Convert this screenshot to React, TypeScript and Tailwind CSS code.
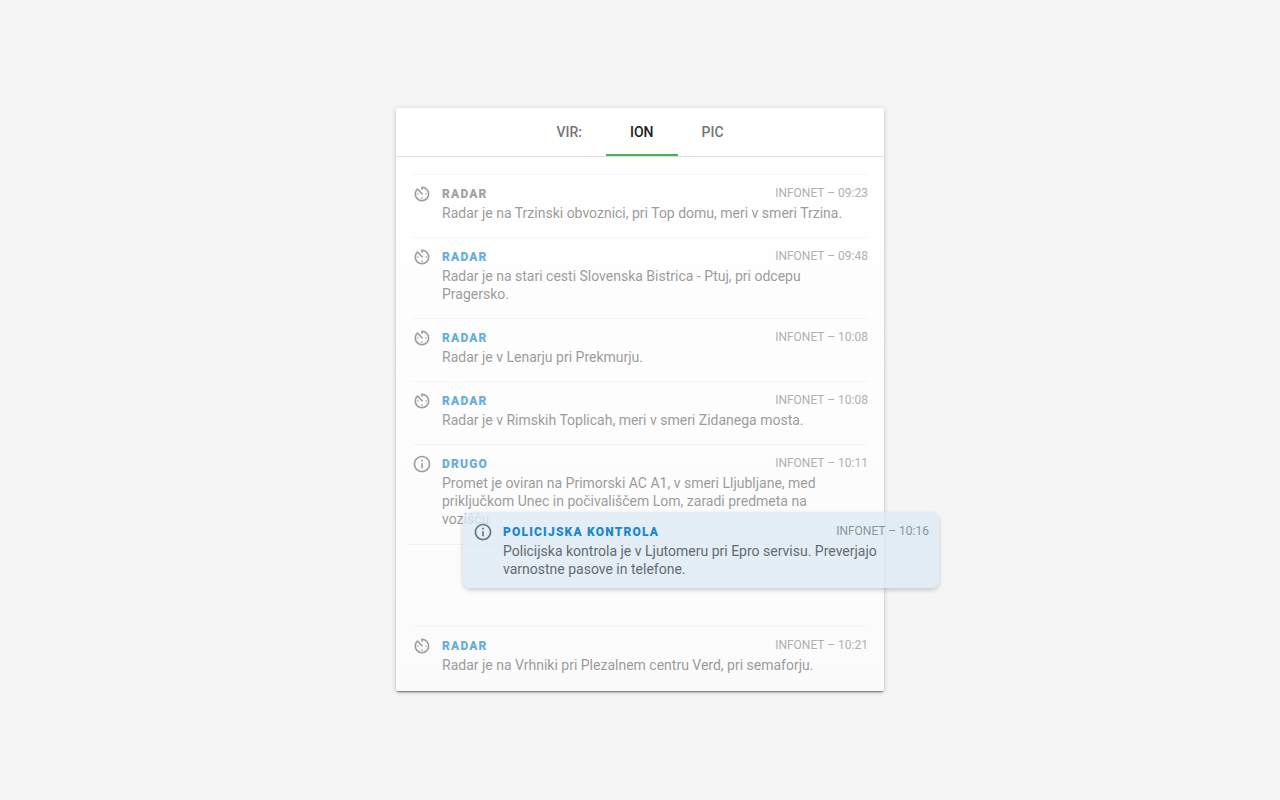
import { useState } from "react";
import { MdAvTimer, MdInfoOutline } from "react-icons/md";

type Report = {
  kind: "radar" | "info";
  title: string;
  time: string;
  text: string;
  seen?: boolean;
};

const before: Report[] = [
  { kind: "radar", title: "RADAR", time: "09:23", text: "Radar je na Trzinski obvoznici, pri Top domu, meri v smeri Trzina.", seen: true },
  { kind: "radar", title: "RADAR", time: "09:48", text: "Radar je na stari cesti Slovenska Bistrica - Ptuj, pri odcepu Pragersko." },
  { kind: "radar", title: "RADAR", time: "10:08", text: "Radar je v Lenarju pri Prekmurju." },
  { kind: "radar", title: "RADAR", time: "10:08", text: "Radar je v Rimskih Toplicah, meri v smeri Zidanega mosta." },
  { kind: "info", title: "DRUGO", time: "10:11", text: "Promet je oviran na Primorski AC A1, v smeri Lljubljane, med priključkom Unec in počivališčem Lom, zaradi predmeta na vozišču." },
];

const after: Report[] = [
  { kind: "radar", title: "RADAR", time: "10:21", text: "Radar je na Vrhniki pri Plezalnem centru Verd, pri semaforju." },
];

const dragged: Report = {
  kind: "info",
  title: "POLICIJSKA KONTROLA",
  time: "10:16",
  text: "Policijska kontrola je v Ljutomeru pri Epro servisu. Preverjajo varnostne pasove in telefone.",
};

function ReportBody({ report, active = false }: { report: Report; active?: boolean }) {
  const Icon = report.kind === "radar" ? MdAvTimer : MdInfoOutline;
  const titleColor = active ? "text-[#1b87cf]" : report.seen ? "text-[#a3a3a3]" : "text-[#68aedb]";
  return (
    <div className="flex gap-2.5">
      <Icon
        aria-hidden="true"
        className={`size-5 shrink-0 ${active ? "text-[#6f7477]" : "text-[#9e9e9e]"}`}
      />
      <div className="min-w-0 flex-1">
        <div className="flex h-5 justify-between">
          <h2 className={`text-xs leading-5 font-black tracking-widest ${titleColor}`}>{report.title}</h2>
          <span className={`text-xs leading-[18px] ${active ? "text-[#8f9599]" : "text-[#b0b0b0]"}`}>
            INFONET – {report.time}
          </span>
        </div>
        <p className={`pr-4 text-sm leading-[18px] ${active ? "text-[#666b6e]" : "text-[#9c9c9c]"}`}>
          {report.text}
        </p>
      </div>
    </div>
  );
}

function ReportRow({ report }: { report: Report }) {
  return (
    <li className="border-t border-[#f5f5f5] pt-[9px] pb-[15px]">
      <ReportBody report={report} />
    </li>
  );
}

export default function App() {
  const [source, setSource] = useState("ION");
  return (
    <main className="flex min-h-screen items-center justify-center bg-[#f5f5f5] pb-px font-[Roboto,sans-serif]">
      <section className="relative w-full max-w-[488px] rounded-xs bg-linear-to-b from-white to-[#fbfbfb] shadow-[0_2px_2px_-1px_rgba(0,0,0,0.5),0_1px_5px_rgba(0,0,0,0.2)]">
        <nav className="flex justify-center border-b border-[#dedede] text-sm font-medium">
          <span className="flex h-12 items-center px-6 text-[#757575]">VIR:</span>
          {["ION", "PIC"].map((name) => (
            <button
              key={name}
              type="button"
              onClick={() => setSource(name)}
              className={`h-12 border-b-2 px-6 pt-0.5 ${
                source === name ? "border-[#4caf50] text-[#212121]" : "border-transparent text-[#757575]"
              }`}
            >
              {name}
            </button>
          ))}
        </nav>
        <ul className="px-4 pt-[17px] pb-0.5">
          {before.map((report) => (
            <ReportRow key={report.time + report.text} report={report} />
          ))}
          <li className="my-px -ml-1 h-[81px] border-t border-[#eef1f3]" />
          {after.map((report) => (
            <ReportRow key={report.time} report={report} />
          ))}
        </ul>
        <article className="absolute top-[404px] left-[67px] w-[476px] rounded-lg bg-[#dceaf4]/80 p-2.5 shadow-[0_2px_5px_rgba(0,0,0,0.2)]">
          <ReportBody report={dragged} active />
        </article>
      </section>
    </main>
  );
}
